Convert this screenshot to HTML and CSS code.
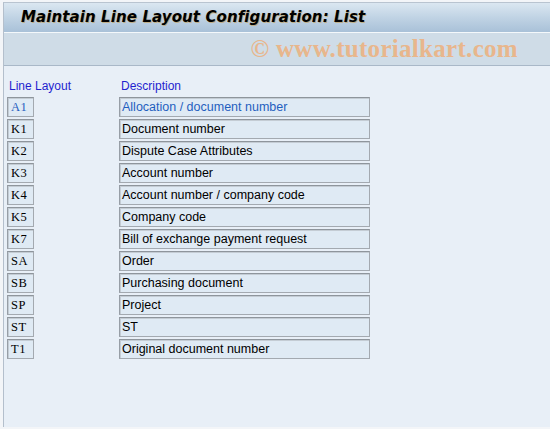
FILE: index.html
```html
<!DOCTYPE html>
<html>
<head>
<meta charset="utf-8">
<link rel="stylesheet" href="styles.css">
</head>
<body>
<div class="page">
  <div class="frame">
    <div class="titlebar"><h1 class="title">Maintain Line Layout Configuration: List</h1></div>
    <div class="toolbar"><span class="watermark">© www.tutorialkart.com</span></div>
    <div class="content">
      <div class="grid">
        <div class="head">Line Layout</div><div class="head">Description</div>
        <div class="code sel">A1</div><div class="desc sel">Allocation / document number</div>
        <div class="code">K1</div><div class="desc">Document number</div>
        <div class="code">K2</div><div class="desc">Dispute Case Attributes</div>
        <div class="code">K3</div><div class="desc">Account number</div>
        <div class="code">K4</div><div class="desc">Account number / company code</div>
        <div class="code">K5</div><div class="desc">Company code</div>
        <div class="code">K7</div><div class="desc">Bill of exchange payment request</div>
        <div class="code">SA</div><div class="desc">Order</div>
        <div class="code">SB</div><div class="desc">Purchasing document</div>
        <div class="code">SP</div><div class="desc">Project</div>
        <div class="code">ST</div><div class="desc">ST</div>
        <div class="code">T1</div><div class="desc">Original document number</div>
      </div>
    </div>
  </div>
</div>
</body>
</html>
```

FILE: styles.css
```css
html, body { margin: 0; padding: 0; }
body { width: 550px; height: 429px; overflow: hidden; background: #f3f5f8; }
.page { padding: 2px 0 0 3px; height: 427px; box-sizing: border-box; }
.frame { border-left: 1px solid #b4bfcc; border-top: 1px solid #b9c4d0; height: 100%; box-sizing: border-box; display: flex; flex-direction: column; }
.titlebar {
  height: 30px; box-sizing: border-box;
  background: linear-gradient(#dbe7f1, #c0d3e4 50%, #a9c1d8);
  border-bottom: 1px solid #f4f8fb;
  display: flex; align-items: center; padding-left: 17px; padding-bottom: 1px;
}
.title {
  margin: 0; font-family: "DejaVu Sans", sans-serif; font-weight: bold; font-style: italic;
  font-size: 15px; color: #000; letter-spacing: 0.1px;
  text-shadow: 1px 1px 0 rgba(200,150,60,0.55);
}
.toolbar {
  height: 33px; box-sizing: border-box; background: #cfdce7;
  border-bottom: 1px solid #a9b8c8;
  display: flex; align-items: center; justify-content: flex-end; padding-right: 32px;
}
.watermark {
  font-family: "Liberation Serif", serif; font-weight: bold; font-size: 25px;
  color: #e8b68c; letter-spacing: 0.3px;
}
.content { flex: 1; background: #e8eff7; padding: 12px 0 0 3px; }
.grid {
  display: grid; grid-template-columns: 112px 251px; row-gap: 2px;
  grid-template-rows: 17px; grid-auto-rows: 20px;
}
.head {
  font-family: "Liberation Sans", sans-serif; font-size: 12px; color: #1f1fcf;
  padding-left: 2px; line-height: 16px; height: 16px;
}
.code, .desc {
  box-sizing: border-box; height: 20px; background: #dfeaf4;
  border: 1px solid #a3a9b0; border-top-color: #8e959c; border-left-color: #979ea6;
  box-shadow: inset 1px 1px 0 #c4ccd4;
  display: flex; align-items: center; color: #000;
}
.code { width: 27px; font-family: "Liberation Serif", serif; font-size: 12.5px; padding-left: 3px; letter-spacing: 0.5px; }
.desc { width: 251px; font-family: "Liberation Sans", sans-serif; font-size: 12.5px; padding-left: 2px; }
.sel { color: #1f5fbf; }
```
